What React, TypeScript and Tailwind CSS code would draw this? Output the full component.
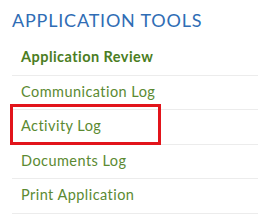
export default function App() {
  const items = [
    { label: 'Application Review', bold: true },
    { label: 'Communication Log' },
    { label: 'Activity Log', marked: true },
    { label: 'Documents Log' },
    { label: 'Print Application' },
  ]

  return (
    <div className="h-[220px] w-[258px] overflow-hidden bg-white pl-[12px] pt-[8px] font-['Lato',sans-serif]">
      <h2 className="text-[18px] leading-[24px] tracking-[0.8px] text-[#2f6db5]">APPLICATION TOOLS</h2>
      <ul className="mt-[9px]">
        {items.map((item) => (
          <li
            key={item.label}
            className="relative h-[34.5px] border-b border-[#ececec] pl-[9px] pt-[6px] text-[14.5px] leading-[20px] tracking-[0.45px] text-[#5b8a32]"
          >
            <span className={item.bold ? 'font-bold text-[#4b7d22]' : ''}>{item.label}</span>
            {item.marked && (
              <div className="absolute left-[-2px] top-[-6px] h-[41px] w-[151px] border-[3px] border-[#e2141b]" />
            )}
          </li>
        ))}
      </ul>
    </div>
  )
}
